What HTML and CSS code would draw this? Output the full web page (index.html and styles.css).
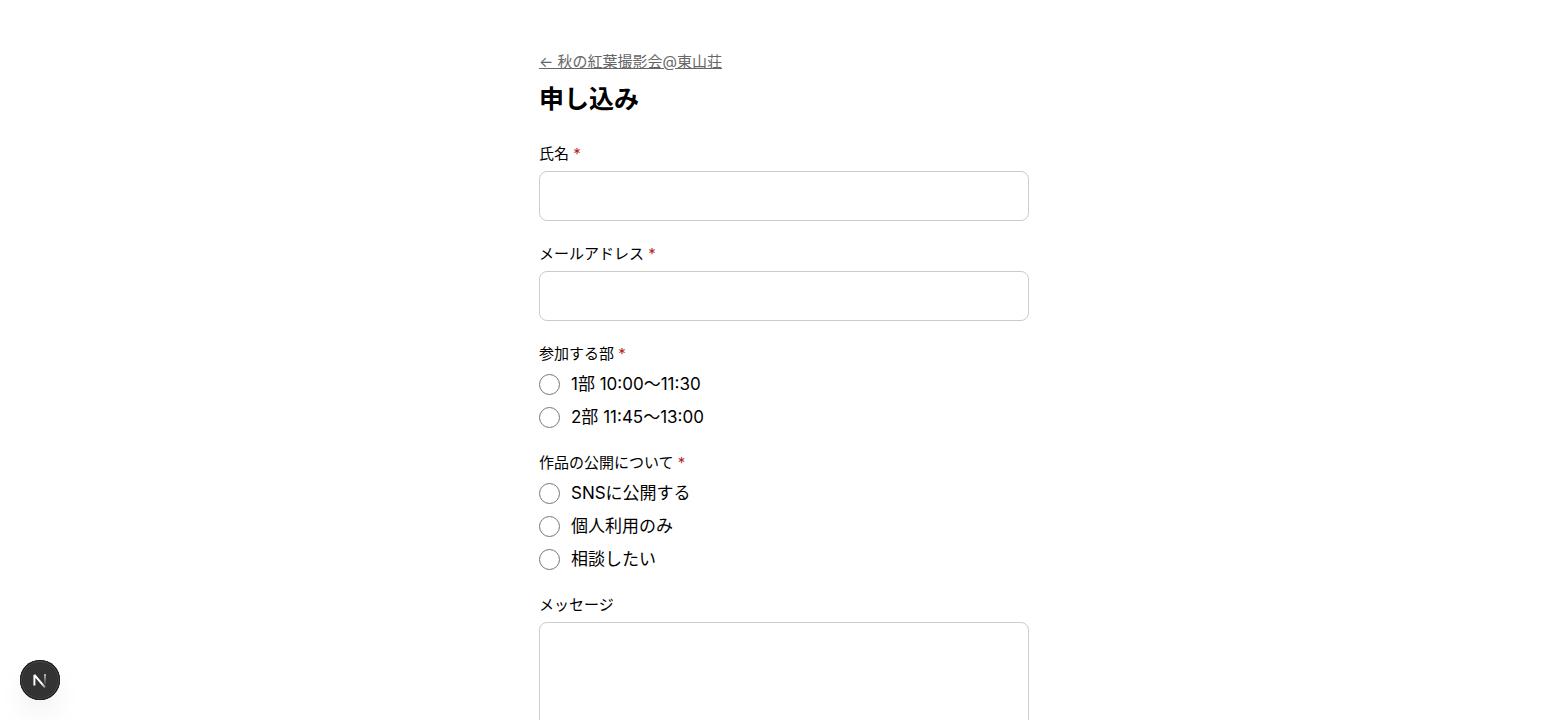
FILE: index.html
```html
<!DOCTYPE html>
<html lang="ja">
<head>
<meta charset="utf-8">
<meta name="viewport" content="width=device-width, initial-scale=1">
<title>申し込み</title>
<link rel="stylesheet" href="styles.css">
</head>
<body>
<main class="page">
  <a class="back" href="#">← 秋の紅葉撮影会@東山荘</a>
  <h1 class="title">申し込み</h1>
  <form class="form">
    <div class="field">
      <label class="label" for="name">氏名 <span class="required">*</span></label>
      <input class="control" id="name" type="text" required>
    </div>
    <div class="field">
      <label class="label" for="email">メールアドレス <span class="required">*</span></label>
      <input class="control" id="email" type="email" required>
    </div>
    <fieldset class="field">
      <legend class="label">参加する部 <span class="required">*</span></legend>
      <div class="options">
        <label class="option"><input class="radio" type="radio" name="slot" required>1部 10:00〜11:30</label>
        <label class="option"><input class="radio" type="radio" name="slot">2部 11:45〜13:00</label>
      </div>
    </fieldset>
    <fieldset class="field">
      <legend class="label">作品の公開について <span class="required">*</span></legend>
      <div class="options">
        <label class="option"><input class="radio" type="radio" name="publish" required>SNSに公開する</label>
        <label class="option"><input class="radio" type="radio" name="publish">個人利用のみ</label>
        <label class="option"><input class="radio" type="radio" name="publish">相談したい</label>
      </div>
    </fieldset>
    <div class="field">
      <label class="label" for="message">メッセージ</label>
      <textarea class="control message" id="message"></textarea>
    </div>
  </form>
</main>
<button class="devtools" type="button" aria-label="Next.js">
  <svg width="40" height="40" viewBox="0 0 40 40" fill="none" aria-hidden="true">
    <defs>
      <linearGradient id="diagonal" x1="14" y1="15" x2="26" y2="28" gradientUnits="userSpaceOnUse">
        <stop offset="0" stop-color="#fff"/>
        <stop offset=".65" stop-color="#fff"/>
        <stop offset="1" stop-color="#fff" stop-opacity=".3"/>
      </linearGradient>
      <linearGradient id="stem" x1="0" y1="14" x2="0" y2="24" gradientUnits="userSpaceOnUse">
        <stop offset="0" stop-color="#fff" stop-opacity=".8"/>
        <stop offset="1" stop-color="#fff" stop-opacity=".1"/>
      </linearGradient>
    </defs>
    <path d="M14.4 25.6V15L25 27.4" stroke="url(#diagonal)" stroke-width="2" stroke-linejoin="bevel"/>
    <path d="M25 14V24" stroke="url(#stem)" stroke-width="1.6"/>
  </svg>
</button>
</body>
</html>
```
FILE: styles.css
```css
* {
  box-sizing: border-box;
}

body {
  margin: 0;
  background: #fff;
  color: #000;
  font-family: Inter, "Noto Sans CJK JP", sans-serif;
  font-size: 17px;
  line-height: 26px;
}

.page {
  max-width: 522px;
  margin: 0 auto;
  padding: 50px 16px;
}

.back {
  display: block;
  width: fit-content;
  color: #666;
  font-size: 15px;
  line-height: 24px;
}

.title {
  margin: 8px 0 27px;
  font-size: 25px;
  line-height: 34px;
  font-weight: 700;
}

.form {
  display: flex;
  flex-direction: column;
  gap: 22px;
}

.field {
  min-width: 0;
  margin: 0;
  padding: 0;
  border: 0;
}

.label {
  display: block;
  padding: 0;
  font-size: 15px;
  line-height: 22px;
}

.required {
  color: #b3261e;
}

.control {
  display: block;
  width: 100%;
  height: 50px;
  margin: 6px 0 0;
  padding: 12px;
  border: 1px solid #ccc;
  border-radius: 8px;
  background: #fff;
  font: inherit;
}

.message {
  height: 152px;
  resize: none;
}

.options {
  display: flex;
  flex-direction: column;
  gap: 7px;
  padding-top: 6px;
}

.option {
  display: flex;
  align-items: center;
  gap: 11px;
}

.radio {
  appearance: none;
  flex: none;
  width: 21px;
  height: 21px;
  margin: 0;
  border: 1px solid #767676;
  border-radius: 50%;
  background: #fff;
}

.radio:checked {
  border: 6px solid #333;
}

.devtools {
  position: fixed;
  left: 20px;
  bottom: 20px;
  width: 40px;
  height: 40px;
  padding: 0;
  border: 0;
  border-radius: 50%;
  background: #333;
  box-shadow: inset 0 0 0 1px #1c1c1c, inset 0 0 0 2px #484848, 0 16px 32px -8px rgba(0, 0, 0, 0.14);
}

.devtools svg {
  display: block;
}
```
